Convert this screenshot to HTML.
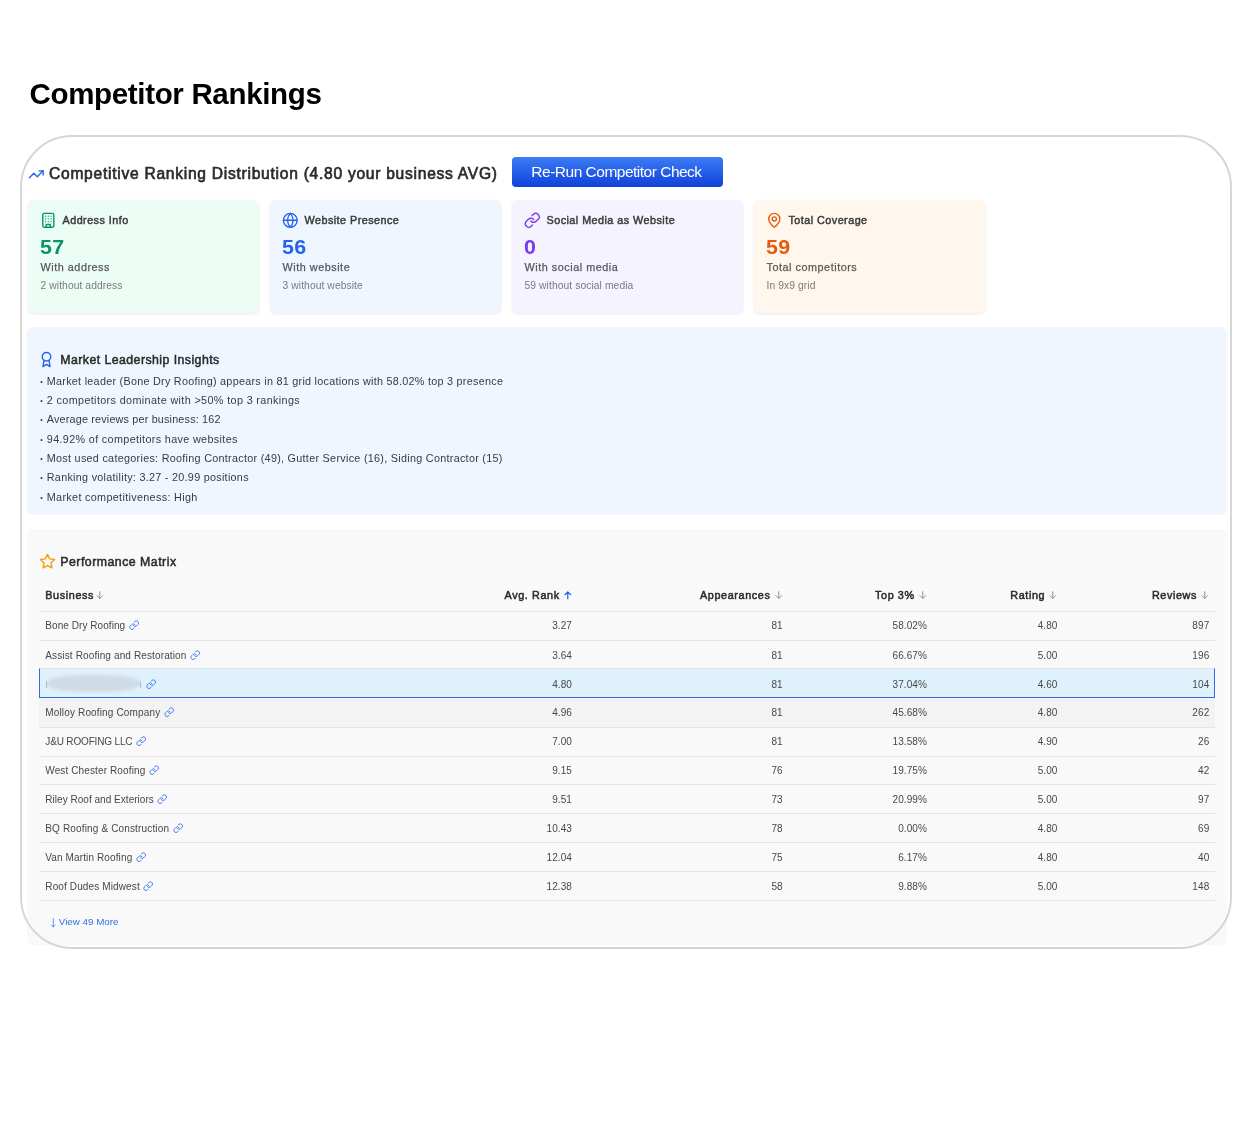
<!DOCTYPE html>
<html lang="en">
<head>
<meta charset="utf-8">
<title>Competitor Rankings</title>
<style>
*{box-sizing:border-box;margin:0;padding:0}
html,body{width:1253px;height:1125px;background:#fff;overflow:hidden}
body{font-family:"Liberation Sans",sans-serif;color:#333;position:relative}
#w{position:absolute;left:0;top:0;width:1253px;height:1125px;will-change:transform}
svg{position:absolute;fill:none;stroke-linecap:round;stroke-linejoin:round;overflow:visible}
h1{position:absolute;left:29.5px;top:76px;font-size:29.5px;line-height:36px;font-weight:700;color:#000;white-space:nowrap;letter-spacing:-0.33px}
.frame{position:absolute;left:20px;top:135px;width:1212px;height:814px;border:2px solid #d6d6d6;border-radius:52px}
.hdr{position:absolute;left:49px;top:163px;font-size:15.6px;line-height:22px;font-weight:400;color:#2b2b2b;-webkit-text-stroke:.65px #2b2b2b;white-space:nowrap;letter-spacing:.73px}
.btn{position:absolute;left:512px;top:157px;width:211px;height:30px;border-radius:4px;background:linear-gradient(#3b7cf6,#1041d9);color:#fff;font-size:15.5px;line-height:29px;text-align:center;white-space:nowrap;letter-spacing:-.5px;padding-right:2px}
.card{position:absolute;top:200px;width:231.5px;height:113.3px;border-radius:6px;box-shadow:0 1px 3px rgba(0,0,0,.09),0 0 1px rgba(0,0,0,.05)}
.card svg{left:12.1px;top:11.9px;width:16.6px;height:16.6px;stroke-width:2}
.card div{position:absolute;left:13px;white-space:nowrap}
.card .t{left:35px;top:13px;font-size:10.8px;line-height:14px;color:#3a3a3a;-webkit-text-stroke:.45px #3a3a3a;letter-spacing:.46px}
.card .n{top:35px;font-size:19.5px;line-height:24px;font-weight:700;letter-spacing:.3px;margin-left:-.5px;transform:scaleX(1.1);transform-origin:0 0}
.card .a{top:60px;font-size:10.8px;line-height:14px;color:#585858;-webkit-text-stroke:.25px #585858;letter-spacing:.54px}
.card .b{top:79px;font-size:10.3px;line-height:13px;color:#7a7a7a;letter-spacing:.08px}
.ins{position:absolute;left:27px;top:327.3px;width:1200px;height:187.7px;background:#eff6ff;border-radius:6px}
.ins svg{left:11.3px;top:23.7px;width:17px;height:17px;stroke:#2563eb;stroke-width:2}
.ins h3{position:absolute;left:33.3px;top:24.7px;font-size:12.3px;line-height:16px;font-weight:400;color:#2b2b2b;-webkit-text-stroke:.5px #2b2b2b;letter-spacing:.45px;white-space:nowrap}
.ins p{position:absolute;left:13.2px;font-size:10.8px;line-height:14px;color:#3a3a3a;white-space:nowrap;letter-spacing:.27px}
.ins p i{display:inline-block;width:6.6px;font-style:normal;font-size:7px;vertical-align:1px;letter-spacing:0}
.pm{position:absolute;left:27px;top:529px;width:1200px;height:415.5px;background:#f9f9f9;border-radius:6px}
.pm>svg{left:11.6px;top:24.2px;width:17px;height:17px;stroke:#f59e0b;stroke-width:2}
.pm h3{position:absolute;left:33.3px;top:25.3px;font-size:12.3px;line-height:16px;font-weight:400;color:#2b2b2b;-webkit-text-stroke:.5px #2b2b2b;letter-spacing:.5px;white-space:nowrap}
.row{position:absolute;left:12px;width:1176px;height:29px;font-size:10px;color:#484848;letter-spacing:.1px}
.ln{position:absolute;left:12px;width:1176px;height:1px;background:#e4e4e4}
.hvbg{position:absolute;left:12px;width:1176px;height:29px;background:#f3f3f3}
.hlbox{position:absolute;left:12px;width:1175.7px;height:30px;background:#e0f1fe;border:1px solid #2f6ae4;border-top-color:#e2e6ea}
.row span{position:absolute;top:0;line-height:29px;white-space:nowrap}
.row .c1{left:6.3px}
.row .c2{right:643px}
.row .c3{right:432.3px}
.row .c4{right:288px}
.row .c5{right:157.5px}
.row .c6{right:5.7px}
.row.h span{line-height:26px;margin-right:.6px}
.row.h .c1 svg{margin-left:2.3px}
.row.h{color:#2b2b2b;font-size:10.8px;letter-spacing:.62px;-webkit-text-stroke:.5px #2b2b2b}
svg.lk{position:relative;display:inline-block;width:10.4px;height:10.4px;stroke:#3b7bf0;stroke-width:2.2;filter:blur(.35px);margin-left:3.6px;vertical-align:-1.2px}
svg.ar{position:relative;display:inline-block;width:7.5px;height:8.4px;stroke:#8a8a8a;stroke-width:1;margin-left:4.2px;vertical-align:-.5px}
svg.ar.up{stroke:#2563eb;stroke-width:1.3}
.blob{position:absolute;left:19.1px;top:146.3px;width:95px;height:17px;border-radius:34px/8.5px;background:#cfdce7;filter:blur(1.6px)}
.mk{position:absolute;width:1.3px;height:7px;background:#aebdc7;filter:blur(.5px);border-radius:1px}
.more{position:absolute;left:31.8px;top:386px;font-size:9.8px;line-height:14px;color:#2f6fde;white-space:nowrap}
.more svg{left:-8.3px;top:2.7px;width:4.6px;height:9.6px;stroke:#2f6fde;stroke-width:.8}
</style>
</head>
<body>
<div id="w">
<h1>Competitor Rankings</h1>
<div class="pm">
<svg viewBox="0 0 24 24"><polygon points="12 2 15.09 8.26 22 9.27 17 14.14 18.18 21.02 12 17.77 5.82 21.02 7 14.14 2 9.27 8.91 8.26 12 2"/></svg>
<h3>Performance Matrix</h3>
<div class="row h" style="top:53px"><span class="c1">Business<svg class="ar" viewBox="0 0 8 9"><path d="M4 .8v7M1 5l3 3 3-3"/></svg></span><span class="c2">Avg. Rank<svg class="ar up" viewBox="0 0 8 9"><path d="M4 8.2v-7M1 4l3-3 3 3"/></svg></span><span class="c3">Appearances<svg class="ar" viewBox="0 0 8 9"><path d="M4 .8v7M1 5l3 3 3-3"/></svg></span><span class="c4">Top 3%<svg class="ar" viewBox="0 0 8 9"><path d="M4 .8v7M1 5l3 3 3-3"/></svg></span><span class="c5">Rating<svg class="ar" viewBox="0 0 8 9"><path d="M4 .8v7M1 5l3 3 3-3"/></svg></span><span class="c6">Reviews<svg class="ar" viewBox="0 0 8 9"><path d="M4 .8v7M1 5l3 3 3-3"/></svg></span></div>
<div class="hvbg" style="top:169px"></div>
<div class="ln" style="top:82px"></div>
<div class="ln" style="top:111px"></div>
<div class="ln" style="top:198px"></div>
<div class="ln" style="top:227px"></div>
<div class="ln" style="top:255px"></div>
<div class="ln" style="top:284px"></div>
<div class="ln" style="top:313px"></div>
<div class="ln" style="top:342px"></div>
<div class="ln" style="top:371px"></div>
<div class="hlbox" style="top:139px"></div>
<div class="blob"></div><div class="mk" style="left:18.7px;top:151.8px"></div><div class="mk" style="left:112.9px;top:152.3px"></div>
<div class="row" style="top:82px"><span class="c1" style="letter-spacing:0.06px">Bone Dry Roofing<svg class="lk" viewBox="0 0 24 24"><path d="M10 13a5 5 0 0 0 7.54.54l3-3a5 5 0 0 0-7.07-7.07l-1.72 1.71"/><path d="M14 11a5 5 0 0 0-7.54-.54l-3 3a5 5 0 0 0 7.07 7.07l1.71-1.71"/></svg></span><span class="c2">3.27</span><span class="c3">81</span><span class="c4">58.02%</span><span class="c5">4.80</span><span class="c6">897</span></div>
<div class="row" style="top:112px"><span class="c1" style="letter-spacing:0.13px">Assist Roofing and Restoration<svg class="lk" viewBox="0 0 24 24"><path d="M10 13a5 5 0 0 0 7.54.54l3-3a5 5 0 0 0-7.07-7.07l-1.72 1.71"/><path d="M14 11a5 5 0 0 0-7.54-.54l-3 3a5 5 0 0 0 7.07 7.07l1.71-1.71"/></svg></span><span class="c2">3.64</span><span class="c3">81</span><span class="c4">66.67%</span><span class="c5">5.00</span><span class="c6">196</span></div>
<div class="row" style="top:141px"><span class="c1" style="left:103.5px"><svg class="lk" viewBox="0 0 24 24"><path d="M10 13a5 5 0 0 0 7.54.54l3-3a5 5 0 0 0-7.07-7.07l-1.72 1.71"/><path d="M14 11a5 5 0 0 0-7.54-.54l-3 3a5 5 0 0 0 7.07 7.07l1.71-1.71"/></svg></span><span class="c2">4.80</span><span class="c3">81</span><span class="c4">37.04%</span><span class="c5">4.60</span><span class="c6">104</span></div>
<div class="row" style="top:169px"><span class="c1" style="letter-spacing:0.15px">Molloy Roofing Company<svg class="lk" viewBox="0 0 24 24"><path d="M10 13a5 5 0 0 0 7.54.54l3-3a5 5 0 0 0-7.07-7.07l-1.72 1.71"/><path d="M14 11a5 5 0 0 0-7.54-.54l-3 3a5 5 0 0 0 7.07 7.07l1.71-1.71"/></svg></span><span class="c2">4.96</span><span class="c3">81</span><span class="c4">45.68%</span><span class="c5">4.80</span><span class="c6">262</span></div>
<div class="row" style="top:198px"><span class="c1" style="letter-spacing:-0.16px">J&amp;U ROOFING LLC<svg class="lk" viewBox="0 0 24 24"><path d="M10 13a5 5 0 0 0 7.54.54l3-3a5 5 0 0 0-7.07-7.07l-1.72 1.71"/><path d="M14 11a5 5 0 0 0-7.54-.54l-3 3a5 5 0 0 0 7.07 7.07l1.71-1.71"/></svg></span><span class="c2">7.00</span><span class="c3">81</span><span class="c4">13.58%</span><span class="c5">4.90</span><span class="c6">26</span></div>
<div class="row" style="top:227px"><span class="c1" style="letter-spacing:0.12px">West Chester Roofing<svg class="lk" viewBox="0 0 24 24"><path d="M10 13a5 5 0 0 0 7.54.54l3-3a5 5 0 0 0-7.07-7.07l-1.72 1.71"/><path d="M14 11a5 5 0 0 0-7.54-.54l-3 3a5 5 0 0 0 7.07 7.07l1.71-1.71"/></svg></span><span class="c2">9.15</span><span class="c3">76</span><span class="c4">19.75%</span><span class="c5">5.00</span><span class="c6">42</span></div>
<div class="row" style="top:256px"><span class="c1" style="letter-spacing:0.03px">Riley Roof and Exteriors<svg class="lk" viewBox="0 0 24 24"><path d="M10 13a5 5 0 0 0 7.54.54l3-3a5 5 0 0 0-7.07-7.07l-1.72 1.71"/><path d="M14 11a5 5 0 0 0-7.54-.54l-3 3a5 5 0 0 0 7.07 7.07l1.71-1.71"/></svg></span><span class="c2">9.51</span><span class="c3">73</span><span class="c4">20.99%</span><span class="c5">5.00</span><span class="c6">97</span></div>
<div class="row" style="top:285px"><span class="c1" style="letter-spacing:0.15px">BQ Roofing &amp; Construction<svg class="lk" viewBox="0 0 24 24"><path d="M10 13a5 5 0 0 0 7.54.54l3-3a5 5 0 0 0-7.07-7.07l-1.72 1.71"/><path d="M14 11a5 5 0 0 0-7.54-.54l-3 3a5 5 0 0 0 7.07 7.07l1.71-1.71"/></svg></span><span class="c2">10.43</span><span class="c3">78</span><span class="c4">0.00%</span><span class="c5">4.80</span><span class="c6">69</span></div>
<div class="row" style="top:314px"><span class="c1" style="letter-spacing:0.12px">Van Martin Roofing<svg class="lk" viewBox="0 0 24 24"><path d="M10 13a5 5 0 0 0 7.54.54l3-3a5 5 0 0 0-7.07-7.07l-1.72 1.71"/><path d="M14 11a5 5 0 0 0-7.54-.54l-3 3a5 5 0 0 0 7.07 7.07l1.71-1.71"/></svg></span><span class="c2">12.04</span><span class="c3">75</span><span class="c4">6.17%</span><span class="c5">4.80</span><span class="c6">40</span></div>
<div class="row" style="top:343px"><span class="c1" style="letter-spacing:0.125px">Roof Dudes Midwest<svg class="lk" viewBox="0 0 24 24"><path d="M10 13a5 5 0 0 0 7.54.54l3-3a5 5 0 0 0-7.07-7.07l-1.72 1.71"/><path d="M14 11a5 5 0 0 0-7.54-.54l-3 3a5 5 0 0 0 7.07 7.07l1.71-1.71"/></svg></span><span class="c2">12.38</span><span class="c3">58</span><span class="c4">9.88%</span><span class="c5">5.00</span><span class="c6">148</span></div>
<div class="more"><svg viewBox="0 0 5 10"><path d="M2.5 .5v9M.6 7.4l1.9 2.1 1.9-2.1"/></svg>View 49 More</div>
</div>
<div class="ins">
<svg viewBox="0 0 24 24"><circle cx="12" cy="8" r="6"/><path d="M15.477 12.89 17 22l-5-3-5 3 1.523-9.11"/></svg>
<h3>Market Leadership Insights</h3>
<p style="top:46.50px;letter-spacing:0.269px"><i>•</i>Market leader (Bone Dry Roofing) appears in 81 grid locations with 58.02% top 3 presence</p>
<p style="top:65.83px;letter-spacing:0.365px"><i>•</i>2 competitors dominate with &gt;50% top 3 rankings</p>
<p style="top:85.16px;letter-spacing:0.182px"><i>•</i>Average reviews per business: 162</p>
<p style="top:104.49px;letter-spacing:0.346px"><i>•</i>94.92% of competitors have websites</p>
<p style="top:123.82px;letter-spacing:0.285px"><i>•</i>Most used categories: Roofing Contractor (49), Gutter Service (16), Siding Contractor (15)</p>
<p style="top:143.15px;letter-spacing:0.281px"><i>•</i>Ranking volatility: 3.27 - 20.99 positions</p>
<p style="top:162.48px;letter-spacing:0.327px"><i>•</i>Market competitiveness: High</p>
</div>
<svg style="left:27.6px;top:165.8px;width:16.5px;height:16.5px;stroke:#2563eb;stroke-width:2" viewBox="0 0 24 24"><polyline points="22 7 13.5 15.5 8.5 10.5 2 17"/><polyline points="16 7 22 7 22 13"/></svg>
<div class="hdr">Competitive Ranking Distribution (4.80 your business AVG)</div>
<div class="btn">Re-Run Competitor Check</div>
<div class="card" style="left:27.5px;background:#ecfdf5"><svg viewBox="0 0 24 24" style="stroke:#059669"><rect x="4" y="2" width="16" height="20" rx="2"/><path d="M9 22v-4h6v4"/><path d="M8 6h.01M16 6h.01M12 6h.01M12 10h.01M12 14h.01M16 10h.01M16 14h.01M8 10h.01M8 14h.01"/></svg><div class="t">Address Info</div><div class="n" style="color:#0a9468">57</div><div class="a">With address</div><div class="b">2 without address</div></div>
<div class="card" style="left:269.5px;background:#eff6ff"><svg viewBox="0 0 24 24" style="stroke:#2563eb"><circle cx="12" cy="12" r="10"/><path d="M12 2a14.5 14.5 0 0 0 0 20 14.5 14.5 0 0 0 0-20"/><path d="M2 12h20"/></svg><div class="t">Website Presence</div><div class="n" style="color:#2563eb">56</div><div class="a">With website</div><div class="b">3 without website</div></div>
<div class="card" style="left:511.5px;background:#f5f3ff"><svg viewBox="0 0 24 24" style="stroke:#7c3aed"><path d="M10 13a5 5 0 0 0 7.54.54l3-3a5 5 0 0 0-7.07-7.07l-1.72 1.71"/><path d="M14 11a5 5 0 0 0-7.54-.54l-3 3a5 5 0 0 0 7.07 7.07l1.71-1.71"/></svg><div class="t">Social Media as Website</div><div class="n" style="color:#7c3aed">0</div><div class="a">With social media</div><div class="b">59 without social media</div></div>
<div class="card" style="left:753.5px;background:#fff7ed"><svg viewBox="0 0 24 24" style="stroke:#ea580c"><path d="M20 10c0 6-8 12-8 12s-8-6-8-12a8 8 0 0 1 16 0Z"/><circle cx="12" cy="10" r="3"/></svg><div class="t">Total Coverage</div><div class="n" style="color:#ea580c">59</div><div class="a">Total competitors</div><div class="b">In 9x9 grid</div></div>
<div class="frame"></div>
</div>
</body>
</html>
